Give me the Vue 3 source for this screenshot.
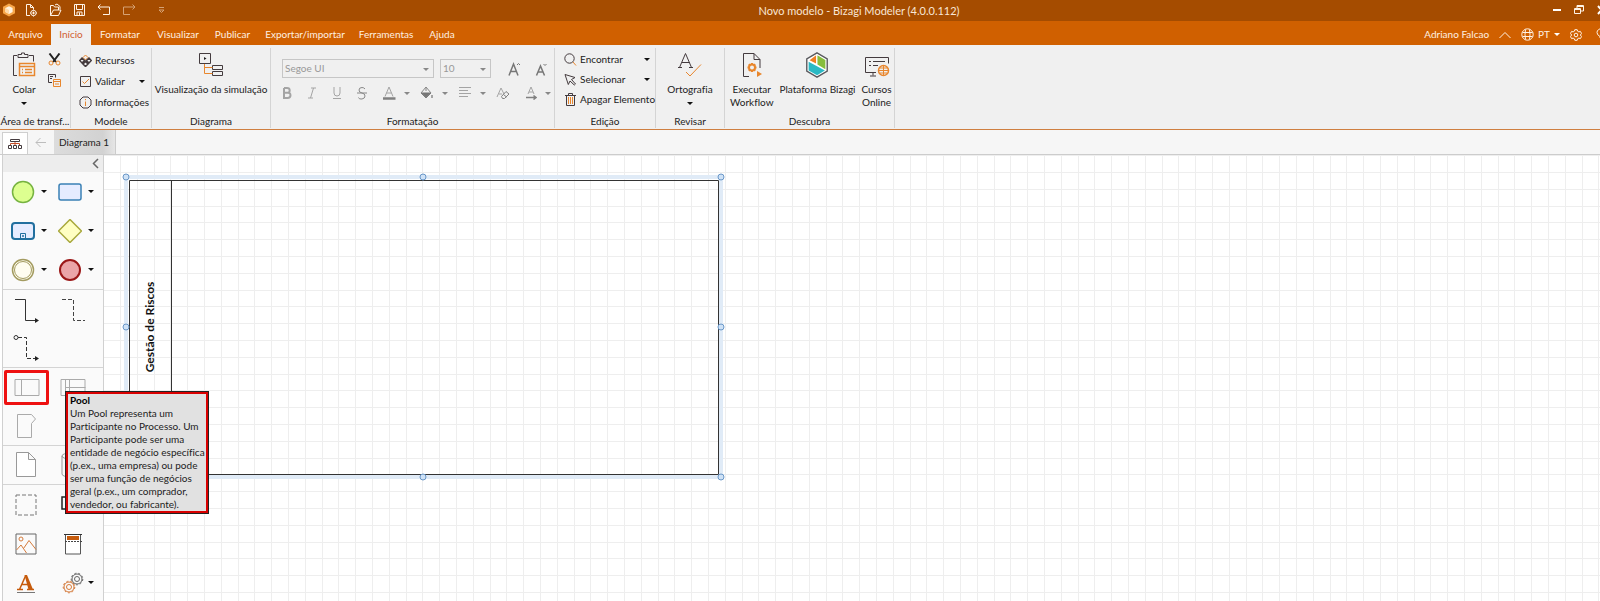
<script setup>
import { ref } from 'vue'

const tabs = [
  { label: 'Arquivo', cls: 'w51' },
  { label: 'Início', cls: 'w40 active' },
  { label: 'Formatar', cls: 'w58' },
  { label: 'Visualizar', cls: 'w58' },
  { label: 'Publicar', cls: 'w51' },
  { label: 'Exportar/importar', cls: 'w94' },
  { label: 'Ferramentas', cls: 'w68' },
  { label: 'Ajuda', cls: 'w44' },
]
const fontName = ref('Segoe UI')
const fontSize = ref('10')
const handles = [
  [22, 22], [319, 22], [617, 22],
  [22, 172], [617, 172],
  [22, 322], [319, 322], [617, 322],
]
</script>

<template>
  <div class="app">
    <header class="titlebar">
      <div class="quick">
        <svg class="logo" width="14" height="14" viewBox="0 0 14 14"><path d="M7 0.5 13 3.7v6.6L7 13.5 1 10.3V3.7z" fill="#f7a64a" /><path d="M7 3.2 10.6 5v4L7 11 3.4 9V5z" fill="#fff3e2" /><path d="M7 7v4L3.4 9V5z" fill="#ffd9a8" /></svg>
        <button aria-label="Novo"><svg width="13" height="14" viewBox="0 0 13 14" class="ln"><path d="M5 12.5H1.5v-11h4l3 3v2M5.5 1.5v3h3" /><circle cx="8.5" cy="10" r="2.7" /><path d="M8.5 8.6v2.8M7.1 10h2.8M8.5 6.5v1M8.5 12.5v1M5 10h1M11 10h1" /></svg></button>
        <button aria-label="Abrir"><svg width="13" height="14" viewBox="0 0 13 14" class="ln"><path d="M1.5 12.5V2.5h3l1 1.5h4v3M1.5 12.5h8l2.5-5.5H4.5zM6 2l2-1 3 2.5V6" /></svg></button>
        <button aria-label="Salvar"><svg width="13" height="14" viewBox="0 0 13 14" class="ln"><path d="M1.5 1.5h10v11h-10zM3.5 1.5v5h6v-5M4 12.5V9h5v3.5M6.5 9.5V12" /></svg></button>
        <button aria-label="Desfazer"><svg width="14" height="14" viewBox="0 0 14 14" class="ln"><path d="M3.5 1.5 1 4l2.5 2.5M1 4h11.5v7.5H6" /></svg></button>
        <button aria-label="Refazer"><svg width="14" height="14" viewBox="0 0 14 14" class="ln dim"><path d="M10.5 1.5 13 4l-2.5 2.5M13 4H1.5v7.5H8" /></svg></button>
        <span class="bar"></span>
        <button aria-label="Personalizar"><svg width="7" height="7" viewBox="0 0 7 7" class="ln dim"><path d="M1 .5h5M1 3h5L3.5 5.5z" /></svg></button>
      </div>
      <h1>Novo modelo - Bizagi Modeler (4.0.0.112)</h1>
      <div class="winctl">
        <button aria-label="Minimizar"><svg width="8" height="10" viewBox="0 0 8 10"><path d="M0 5h8" stroke="#fff" stroke-width="2" /></svg></button>
        <button aria-label="Restaurar"><svg width="10" height="10" viewBox="0 0 10 10" class="ln"><path d="M.5 3.5h6v5h-6zM.5 4.5h6M3 3V.5h6.5V6H7M3 1.5h6" /></svg></button>
        <button aria-label="Fechar"><svg width="9" height="10" viewBox="0 0 9 10"><path d="M1 1l7 8M8 1 1 9" stroke="#fff" stroke-width="2" /></svg></button>
      </div>
    </header>

    <nav class="menubar">
      <button v-for="t in tabs" :key="t.label" class="tab" :class="t.cls">{{ t.label }}</button>
      <div class="account">
        <span>Adriano Falcao</span>
        <button aria-label="Recolher"><svg width="12" height="8" viewBox="0 0 12 8" class="ln"><path d="M.5 7 6 1.5 11.5 7" /></svg></button>
        <button class="lang"><svg width="13" height="13" viewBox="0 0 13 13" class="ln"><circle cx="6.5" cy="6.5" r="5.7" /><path d="M4.5 1.5Q3.5 6.5 4.5 11.5M8.5 1.5Q9.5 6.5 8.5 11.5M1.5 4.5h10M1.5 8.5h10" /></svg>PT<i class="caret white"></i></button>
        <button aria-label="Opções"><svg width="12" height="12" viewBox="0 0 12 12" class="ln"><path d="M4.8.7h2.4l.4 1.5 1.3.7 1.5-.5 1.1 2L10.4 6l1.1 1.6-1.1 2-1.5-.5-1.3.7-.4 1.5H4.8l-.4-1.5-1.3-.7-1.5.5-1.1-2L1.6 6 .5 4.4l1.1-2 1.5.5 1.3-.7z" /><circle cx="6" cy="6" r="1.8" /></svg></button>
        <button class="bulb" aria-label="Dicas"><svg width="12" height="13" viewBox="0 0 12 13" class="ln"><path d="M4 10V8.5Q1 7 1 4.5a5 4 0 0 1 10 0Q11 7 8 8.5V10zM4 12h4" /></svg></button>
      </div>
    </nav>

    <section class="ribbon">
      <div class="group g1">
        <div class="body">
          <button class="big paste">
            <svg width="24" height="26" viewBox="0 0 24 26" fill="none"><path d="M5 3.5H1.5v20H5M17 3.5h4.5v6M6 5.5v-3h3.5V1h3v1.5H16v3z" stroke="#443b3e" /><path d="M7.5 11.5h15v12h-15zM7.5 14.5h15M10 17.5h1M13 17.5h7M10 20.5h1M13 20.5h7" stroke="#e8862d" stroke-width="1.5" /></svg>
            <span>Colar</span><i class="caret"></i>
          </button>
          <div class="mini">
            <button aria-label="Recortar"><svg width="13" height="13" viewBox="0 0 13 13" fill="none"><path d="M1.5.5 8 9M11.5.5 5 9" stroke="#222" stroke-width="2" /><circle cx="3" cy="10" r="2" stroke="#e8862d" /><circle cx="10" cy="10" r="2" stroke="#e8862d" /></svg></button>
            <button aria-label="Copiar"><svg width="13" height="13" viewBox="0 0 13 13" fill="none"><path d="M4 8.5H.5v-8h7v3M2 2.5h3M2 4.5h2" stroke="#443b3e" /><path d="M5.5 5.5h7v7h-7zM5 7.5h7M7 10h4" stroke="#e8862d" /></svg></button>
          </div>
        </div>
        <div class="label">Área de transf...</div>
      </div>

      <div class="group g2">
        <div class="rows">
          <button><svg width="13" height="13" viewBox="0 0 13 13" fill="none" stroke="#443b3e"><path d="M6.5 1 9 3.5 6.5 6 4 3.5z" stroke="#e8862d" /><path d="M3 4 5.5 6.5 3 9 .7 6.5zM10 4l2.3 2.5L10 9 7.5 6.5zM6.5 7.5 9 10l-2.5 2.5L4 10z" stroke-width="1.5" /></svg><span>Recursos</span></button>
          <button><svg width="13" height="13" viewBox="0 0 13 13" fill="none"><path d="M1.5 1.5h10v10h-10z" stroke="#443b3e" /><path d="M3.5 6.5 5.5 8.5 10 4" stroke="#e8862d" /></svg><span>Validar</span><i class="caret"></i></button>
          <button><svg width="13" height="13" viewBox="0 0 13 13" fill="none"><path d="M4 1h5l3 3v5l-3 3H4L1 9V4z" stroke="#443b3e" /><path d="M6.5 3v1.2M6.5 5.5V10" stroke="#e8862d" /></svg><span>Informações</span></button>
        </div>
        <div class="label">Modele</div>
      </div>

      <div class="group g3">
        <div class="body center">
          <button class="big"><svg width="24" height="26" viewBox="0 0 24 26" fill="none" stroke="#443b3e"><path d="M.5 1.5h11v10H.5z" /><path d="M5 5v3l2.5-1.5z" fill="#222" stroke="none" /><path d="M13.5 13.5h10v4h-10zM13.5 19.5h10v4h-10z" /><path d="M5.5 12v9.5h8M5.5 15.5h8" stroke="#e8862d" /></svg><span>Visualização da simulação</span></button>
        </div>
        <div class="label">Diagrama</div>
      </div>

      <div class="group g4">
        <div class="format">
          <div class="line one">
            <span class="pick family"><select v-model="fontName" disabled aria-label="Fonte"><option>Segoe UI</option></select></span>
            <span class="pick size"><select v-model="fontSize" disabled aria-label="Tamanho"><option>10</option></select></span>
            <button disabled class="grow" aria-label="Aumentar fonte"><svg width="13" height="16" viewBox="0 0 13 16"><path d="M1 14.5 5.5 3 10 14.5M2.5 10.5h6" stroke-width="1.5" /><path d="M9 4l1.5-1.5L12 4" /></svg></button>
            <button disabled class="shrink" aria-label="Reduzir fonte"><svg width="13" height="16" viewBox="0 0 13 16"><path d="M1.5 14.5 5.5 5l4 9.5M3 11h5" stroke-width="1.5" /><path d="M8.5 3 10 4.5 11.5 3" /></svg></button>
          </div>
          <div class="line two">
            <button disabled aria-label="Negrito"><svg width="10" height="14" viewBox="0 0 10 14"><path d="M2 2v10h3.5q3 0 3-2.7T5.5 6.7H2M2 2h3q2.7 0 2.7 2.4T5 6.7" stroke-width="2" /></svg></button>
            <button disabled aria-label="Itálico"><svg width="10" height="14" viewBox="0 0 10 14"><path d="M4 2h5M1 12h5M6.5 2l-3 10" /></svg></button>
            <button disabled aria-label="Sublinhado"><svg width="10" height="14" viewBox="0 0 10 14"><path d="M2 1v6q0 3 3 3t3-3V1M1 12.5h8" /></svg></button>
            <button disabled aria-label="Tachado"><svg width="10" height="14" viewBox="0 0 10 14"><path d="M8 3Q7 1.5 5 1.5 2 1.5 2 4t3 3 3 3-3 3-3.5-1.5M0 7h10" stroke="#888" /></svg></button>
            <button disabled aria-label="Cor da fonte" class="drop"><svg width="14" height="14" viewBox="0 0 14 14"><path d="M3 10.5 7 1l4 9.5M4.5 7h5" /><path d="M1 12.5h12.5" stroke="#808080" stroke-width="2.5" /></svg><i class="caret gray"></i></button>
            <button disabled aria-label="Preenchimento" class="drop"><svg width="14" height="14" viewBox="0 0 14 14"><path d="M6 1 1 7l5 5 5-5zM6 1v4" stroke="#888" /><path d="M1.5 7h9L6 11.5z" fill="#777" stroke="#777" /><path d="M12 9v3" stroke-width="2" /></svg><i class="caret gray"></i></button>
            <button disabled aria-label="Alinhamento" class="drop"><svg width="14" height="14" viewBox="0 0 14 14"><path d="M1 1.5h12M1 4.5h9M1 7.5h12M1 10.5h9" /></svg><i class="caret gray"></i></button>
            <button disabled aria-label="Limpar formatação"><svg width="14" height="14" viewBox="0 0 14 14"><path d="M1 11 5 2l3 6M3 8h3" /><path d="M5.5 10.5 10 5.5l3 2.5-4.5 4.5h-2zM7.5 8.5l3 2.5" stroke="#808080" /></svg></button>
            <button disabled aria-label="Direção do texto" class="drop"><svg width="12" height="14" viewBox="0 0 12 14"><path d="M3 8 6 1l3 7M4 6h4" /><path d="M1 11.5h9M8.5 9.5l2.5 2-2.5 2" stroke="#808080" stroke-width="1.5" /></svg><i class="caret gray"></i></button>
          </div>
        </div>
        <div class="label">Formatação</div>
      </div>

      <div class="group g5">
        <div class="rows">
          <button><svg width="13" height="13" viewBox="0 0 13 13" fill="none"><circle cx="5.5" cy="5.5" r="4.7" stroke="#443b3e" /><path d="M9 9l3 3.5" stroke="#e8862d" /></svg><span>Encontrar</span><i class="caret"></i></button>
          <button><svg width="13" height="13" viewBox="0 0 13 13" fill="none" stroke="#443b3e"><path d="M1 1.5 11 4.5 7.5 6.5 11.5 11l-1.2 1L6 8l-1.7 3.5z" /></svg><span>Selecionar</span><i class="caret"></i></button>
          <button><svg width="13" height="13" viewBox="0 0 13 13" fill="none" stroke="#443b3e"><path d="M1 2.5h11M4.5 2.5v-2h4v2M2.5 2.5v10h8v-10" /><path d="M4.5 4v7M6.5 4v7M8.5 4v7" stroke="#e8862d" /></svg><span>Apagar Elemento</span></button>
        </div>
        <div class="label">Edição</div>
      </div>

      <div class="group g6">
        <div class="body center">
          <button class="big"><svg width="24" height="26" viewBox="0 0 24 26" fill="none"><path d="M1.5 15.5 7.5 1.5l6 14M0 15.5h4M11 15.5h4M4 10.5h7.5" stroke="#443b3e" /><path d="M8 20l4 4L23 12.5" stroke="#e8862d" /></svg><span>Ortografia</span><i class="caret"></i></button>
        </div>
        <div class="label">Revisar</div>
      </div>

      <div class="group g7">
        <div class="body learn">
          <button class="big"><svg width="22" height="26" viewBox="0 0 22 26" fill="none"><path d="M8 24.5H2.5v-23H13l6 6V16M13 1.5v6h6" stroke="#443b3e" /><circle cx="11" cy="15.5" r="3" stroke="#e8862d" stroke-width="2" /><path d="M11 11v1.5M11 18.5V20M6.5 15.5H8M14 15.5h1.5M7.8 12.3l1 1M13.2 17.7l1 1M14.2 12.3l-1 1M8.8 17.7l-1 1" stroke="#e8862d" stroke-width="2" /><path d="M16 19v6l5-3z" fill="#e8862d" /></svg><span>Executar<br>Workflow</span></button>
          <button class="big"><svg width="26" height="28" viewBox="0 0 26 28"><path d="M13 1 24 7.5v13L13 27 2 20.5v-13z" fill="#fff" stroke="#59595d" stroke-width="1.5" /><path d="M13.5 3.5 22 8.5v10l-8.5-5z" fill="#86bd3b" /><path d="M12 3.5v9L5 9z" fill="#ef7f22" /><path d="M4 10.5 21.5 20 13 25l-9-5z" fill="#2bb9c4" /></svg><span>Plataforma Bizagi</span></button>
          <button class="big"><svg width="26" height="26" viewBox="0 0 26 26" fill="none"><path d="M12 20.5H1.5v-15h23v6M9 20.5v3M6 24h6M5 9.5h2M5 13.5h2M9 9.5h12M9 13.5h5" stroke="#443b3e" /><circle cx="19.5" cy="18.5" r="5" fill="#f0f0f0" stroke="#e8862d" stroke-width="1.5" /><path d="M14.5 18.5h10M19.5 13.5v10M16 16h7M16 21h7" stroke="#e8862d" /></svg><span>Cursos<br>Online</span></button>
        </div>
        <div class="label">Descubra</div>
      </div>
    </section>

    <div class="docbar">
      <button class="tree" aria-label="Diagramas"><svg width="14" height="12" viewBox="0 0 14 12" fill="none" stroke="#443b3e"><path d="M2.5 1.5h9v2h-9z" /><path d="M7 4v3M2.5 7V5.5h9V7" stroke="#c6502a" /><path d="M.5 7.5h3v3h-3zM5.5 7.5h3v3h-3zM10.5 7.5h3v3h-3z" /></svg></button>
      <button class="back" aria-label="Voltar"><svg width="12" height="11" viewBox="0 0 12 11" fill="none" stroke="#bdbdbd"><path d="M11 5.5H1M5.5 1 1 5.5 5.5 10" /></svg></button>
      <button class="doc">Diagrama 1</button>
    </div>

    <main class="work">
      <aside class="palette">
        <div class="phead"><button aria-label="Recolher paleta"><svg width="7" height="11" viewBox="0 0 7 11" fill="none" stroke="#666" stroke-width="1.5"><path d="M6 1 1.5 5.5 6 10" /></svg></button></div>
        <div class="sect">
          <button aria-label="Evento inicial"><svg width="24" height="24" viewBox="0 0 24 24"><circle cx="12" cy="12" r="10.5" fill="#ddff90" stroke="#76b340" stroke-width="1.5" /></svg><i class="caret"></i></button>
          <button aria-label="Tarefa"><svg width="24" height="24" viewBox="0 0 24 24"><rect x="1" y="4" width="22" height="16" rx="2" fill="#e6ecff" stroke="#3a80b5" stroke-width="1.5" /></svg><i class="caret"></i></button>
          <button aria-label="Subprocesso"><svg width="24" height="24" viewBox="0 0 24 24"><rect x="1" y="4" width="22" height="16" rx="3" fill="#e6ecff" stroke="#216f9f" stroke-width="2" /><path d="M9.5 14.5h5v5h-5zM11 17h2M12 16v2" fill="none" stroke="#216f9f" /></svg><i class="caret"></i></button>
          <button aria-label="Gateway"><svg width="24" height="24" viewBox="0 0 24 24"><path d="M12 .5 23.5 12 12 23.5.5 12z" fill="#ffffc2" stroke="#a8a83c" stroke-width="1.5" /></svg><i class="caret"></i></button>
          <button aria-label="Evento intermediário"><svg width="24" height="24" viewBox="0 0 24 24"><circle cx="12" cy="12" r="10.5" fill="#fffdf0" stroke="#a39b60" stroke-width="1.5" /><circle cx="12" cy="12" r="8.5" fill="none" stroke="#a39b60" /></svg><i class="caret"></i></button>
          <button aria-label="Evento final"><svg width="24" height="24" viewBox="0 0 24 24"><circle cx="12" cy="12" r="10" fill="#eba5a8" stroke="#9b1717" stroke-width="2" /></svg><i class="caret"></i></button>
        </div>
        <div class="sect plain short inset">
          <button aria-label="Fluxo de sequência"><svg width="26" height="26" viewBox="0 0 26 26" fill="none" stroke="#333"><path d="M2 2.5h10.5v21H22" /><path d="M22 21v5l4-2.5z" fill="#222" stroke="none" /></svg></button>
          <button aria-label="Associação"><svg width="26" height="26" viewBox="0 0 26 26" fill="none" stroke="#444" stroke-dasharray="4 2"><path d="M2 2.5h11.5v21H25" /></svg></button>
          <button aria-label="Fluxo de mensagem"><svg width="26" height="26" viewBox="0 0 26 26" fill="none" stroke="#333"><circle cx="3" cy="2.5" r="2" /><path d="M5 2.5h8.5v21H22" stroke-dasharray="4 2" /><path d="M22 21v5l4-2.5z" fill="#222" stroke="none" /></svg></button>
        </div>
        <div class="sect plain short inset">
          <button class="marked" aria-label="Pool"><svg width="26" height="20" viewBox="0 0 26 20" fill="none" stroke="#aaa"><path d="M1 1.5h24v16H1zM7.5 1.5v16" /></svg></button>
          <button aria-label="Lane"><svg width="26" height="20" viewBox="0 0 26 20" fill="none" stroke="#aaa"><path d="M1 1.5h24v16H1zM5.5 1.5v16M9.5 1.5v16M5.5 9.5h20" /></svg></button>
          <button aria-label="Fase"><svg width="26" height="26" viewBox="0 0 26 26" fill="none" stroke="#aaa"><path d="M4.5 1.5h14l4 4.5-4 4.5v14h-14z" /></svg></button>
        </div>
        <div class="sect plain short">
          <button aria-label="Objeto de dados"><svg width="26" height="26" viewBox="0 0 26 26" fill="#fff" stroke="#999"><path d="M3.5.5h12l7 7v17h-19zM15.5.5v7h7" /></svg></button>
          <button aria-label="Depósito de dados"><svg width="26" height="26" viewBox="0 0 26 26" fill="none" stroke="#999"><path d="M2 4q0-3 11-3t11 3v18q0 3-11 3T2 22zM2 4q0 3 11 3t11-3" /></svg></button>
        </div>
        <div class="sect plain last">
          <button aria-label="Grupo"><svg width="22" height="22" viewBox="0 0 22 22" fill="none" stroke="#777" stroke-dasharray="4 2"><path d="M1 1h20v20H1z" /></svg></button>
          <button aria-label="Anotação"><svg width="24" height="18" viewBox="0 0 24 18" fill="none" stroke="#222" stroke-width="1.5"><path d="M8 1H1v12h7" /></svg></button>
          <button aria-label="Imagem"><svg width="22" height="22" viewBox="0 0 22 22" fill="none"><path d="M1 1h20v20H1z" stroke="#666" /><path d="M1.5 17 6 12l5.5 8M8.5 15.5 14 7.5l7 9" stroke="#d57a3b" /><circle cx="6" cy="6" r="2" stroke="#d57a3b" /></svg></button>
          <button aria-label="Cabeçalho"><svg width="22" height="22" viewBox="0 0 22 22"><path d="M3.5 1v20h15V1" fill="#fff" stroke="#555" /><path d="M2 1.5h18" stroke="#333" /><path d="M5 3h12v4H5z" fill="#c65b0c" /><path d="M3 8.5h17" stroke="#444" stroke-dasharray="2 1" /></svg></button>
          <button aria-label="Texto formatado"><svg width="22" height="22" viewBox="0 0 22 22"><path d="M4.5 17.5 10.5 4M7 12.5h7M2 17.5h6M12 17.5h7" fill="none" stroke="#c65b0c" stroke-width="1.5" /><path d="M9.5 3H12l6 14.5h-4.5z" fill="#c65b0c" /><path d="M2 20.5h18" stroke="#777" /></svg></button>
          <button class="withdrop" aria-label="Artefatos"><svg width="22" height="22" viewBox="0 0 22 22" fill="none"><g stroke="#666"><circle cx="15" cy="7" r="2.5" /><circle cx="15" cy="7" r="5" /><circle cx="15" cy="7" r="5.8" stroke-dasharray="2 2" /></g><g stroke="#d57a3b"><circle cx="7" cy="15" r="5" fill="#fafafa" /><circle cx="7" cy="15" r="2.5" /><circle cx="7" cy="15" r="5.8" stroke-dasharray="2 2" /></g></svg><i class="caret"></i></button>
        </div>
      </aside>

      <svg class="canvas" width="100%" height="100%" role="img" aria-label="Pool Gestão de Riscos">
        <defs>
          <pattern id="grid" width="84" height="84" patternUnits="userSpaceOnUse" x="16" y="17">
            <path d="M.5 0v84M17.5 0v84M34.5 0v84M50.5 0v84M67.5 0v84M0 .5h84M0 17.5h84M0 34.5h84M0 50.5h84M0 67.5h84" stroke="#eeeeee" />
          </pattern>
        </defs>
        <rect width="100%" height="100%" fill="#fff" />
        <rect width="100%" height="100%" fill="url(#grid)" />
        <rect x="22" y="22" width="595" height="300" fill="none" stroke="#e0ebf7" stroke-width="4" />
        <path d="M25.5 25.5h589v294h-589zM67.5 25.5v294" fill="none" stroke="#333" />
        <text x="-172" y="50" transform="rotate(-90)" text-anchor="middle" class="pool-name">Gestão de Riscos</text>
        <circle v-for="(h, i) in handles" :key="i" :cx="h[0]" :cy="h[1]" r="3" fill="#cfe2f6" stroke="#6a97c8" />
      </svg>

      <div class="tip" role="tooltip">
        <strong>Pool</strong>
        <p>Um Pool representa um<br>Participante no Processo. Um<br>Participante pode ser uma<br>entidade de negócio específica<br>(p.ex., uma empresa) ou pode<br>ser uma função de negócios<br>geral (p.ex., um comprador,<br>vendedor, ou fabricante).</p>
      </div>
    </main>
  </div>
</template>

<style>
body { margin: 0; overflow: hidden; }
</style>

<style scoped>
.app { height: 100vh; display: flex; flex-direction: column; overflow: hidden; font-family: Lato, "Open Sans", sans-serif; font-variant-ligatures: none; font-size: 10px; line-height: 13px; color: #222; background: #fff; }
button { display: flex; align-items: center; justify-content: center; margin: 0; padding: 0; border: 0; background: none; font: inherit; color: inherit; white-space: nowrap; flex: none; }
svg { display: block; flex: none; }
.ln { fill: none; stroke: #fff3e6; }
.dim { stroke: #d6a274; }
.caret { flex: none; width: 0; height: 0; border: 3px solid transparent; border-top-color: #111; border-bottom: 0; }
.caret.white { border-top-color: #fff; }
.caret.gray { border-top-color: #888; }

.titlebar { height: 21px; padding-bottom: 1px; box-sizing: border-box; flex: none; display: flex; align-items: center; background: #a54c00; color: #f9e6d5; }
.quick { display: flex; align-items: center; gap: 11px; width: 165px; padding-left: 2px; box-sizing: border-box; flex: none; }
.logo { margin-right: -2px; }
.bar { width: 1px; height: 13px; background: #c98a5a; }
.titlebar h1 { flex: 1; margin: 0; text-align: center; font-size: 11px; font-weight: 400; line-height: 15px; }
.winctl { display: flex; gap: 13px; margin-right: -6px; }

.menubar { height: 24px; flex: none; display: flex; align-items: flex-end; background: #d06000; color: #fff0e2; }
.tab { height: 21px; }
.tab.active { background: #f0f0f0; color: #d06030; }
.w40 { width: 40px; } .w44 { width: 44px; } .w51 { width: 51px; } .w58 { width: 58px; } .w68 { width: 68px; } .w94 { width: 94px; }
.account { margin-left: auto; margin-right: -8px; height: 21px; display: flex; align-items: center; gap: 10px; }
.lang { gap: 4px; }
.bulb { margin-left: 4px; }

.ribbon { height: 80px; flex: none; display: flex; padding: 3px 0 1px; background: #f0f0f0; border-bottom: 1px solid #cf7f40; }
.group { flex: none; display: flex; flex-direction: column; box-sizing: border-box; border-right: 1px solid #d4d4d4; }
.g1 { width: 71px; } .g2 { width: 81px; } .g3 { width: 119px; } .g4 { width: 284px; } .g5 { width: 101px; } .g6 { width: 69px; } .g7 { width: 170px; }
.label { margin-top: auto; height: 13px; text-align: center; white-space: nowrap; }
.body { display: flex; padding-top: 4px; }
.body.center { justify-content: center; }
.big { flex-direction: column; justify-content: flex-start; }
.big svg { height: 26px; }
.big span { margin-top: 5px; }
.big .caret { margin-top: 6px; }
.paste { width: 48px; }
.mini { display: flex; flex-direction: column; gap: 8px; padding-top: 1px; }
.rows { display: flex; flex-direction: column; gap: 8px; padding: 6px 6px 0 8px; }
.rows button { justify-content: flex-start; gap: 3px; }
.rows .caret { margin-left: auto; }
.g5 .rows { gap: 7px; padding: 5px 5px 0 9px; }
.learn { padding-left: 5px; gap: 6px; }

.format { padding: 11px 0 0 11px; }
.line { display: flex; align-items: center; }
.format svg { fill: none; stroke: #a4a4a4; }
.pick { position: relative; height: 19px; }
.pick::after { content: ""; position: absolute; right: 5px; top: 9px; border: 3px solid transparent; border-top-color: #888; border-bottom: 0; }
.pick select { appearance: none; width: 100%; height: 19px; border: 1px solid #c6c6c6; border-radius: 0; background: #f0f0f0; font: inherit; color: #999; padding: 0 2px; opacity: 1; display: block; }
.family { width: 152px; }
.size { width: 51px; margin-left: 6px; }
.grow { margin-left: 17px; }
.shrink { margin-left: 14px; }
.grow svg, .shrink svg { stroke: #777; }
.two { margin-top: 8px; gap: 15px; }
.two .drop { gap: 8px; margin-right: -5px; }

.docbar { height: 24px; flex: none; display: flex; align-items: stretch; background: #f6f6f6; border-bottom: 1px solid #ccc; }
.tree { width: 26px; margin: 2px 0 0 2px; border: 1px solid #cfcfcf; border-bottom: 0; background: #fff; box-sizing: border-box; }
.back { width: 26px; }
.doc { width: 62px; background: linear-gradient(90deg, #dcdcdc, #d2d2d2 80%, #e6e6e6); border-right: 1px solid #ccc; justify-content: flex-start; padding-left: 5px; box-sizing: border-box; }

.work { position: relative; flex: 1; min-height: 0; display: flex; overflow: hidden; }
.palette { width: 102px; flex: none; margin-left: 2px; box-sizing: border-box; background: #fafafa; border-left: 1px solid #d0d0d0; border-right: 1px solid #d0d0d0; }
.phead { height: 17px; background: #ededed; display: flex; justify-content: flex-end; padding-right: 4px; }
.sect { display: grid; grid-template-columns: 47px 47px; grid-auto-rows: 39px; border-bottom: 1px solid #d4d4d4; }
.sect button { gap: 6px; justify-content: flex-start; padding-left: 8px; }
.sect.short { grid-auto-rows: 38px; }
.sect.inset { padding-top: 1px; }
.sect.plain button { justify-content: center; padding: 0 2px 0 0; }
.sect.last { border-bottom: 0; }
.sect .withdrop { position: relative; }
.sect .withdrop .caret { position: absolute; right: 3px; top: 18px; }
.sect.plain .marked { border: 3px solid #ee1111; height: 35px; margin: 1px 1px 0; padding: 0; box-sizing: border-box; border-radius: 2px; }
.canvas { flex: 1; min-width: 0; }
.pool-name { font-size: 12px; font-weight: 700; fill: #111; }
.tip { position: absolute; left: 65px; top: 236px; width: 144px; box-sizing: border-box; border: 3px solid #d90000; outline: 1px solid #222; outline-offset: -1px; background: #e1e1e1; padding: 0 2px; white-space: nowrap; }
.tip strong { display: block; color: #000; }
.tip p { margin: 0; }
</style>
